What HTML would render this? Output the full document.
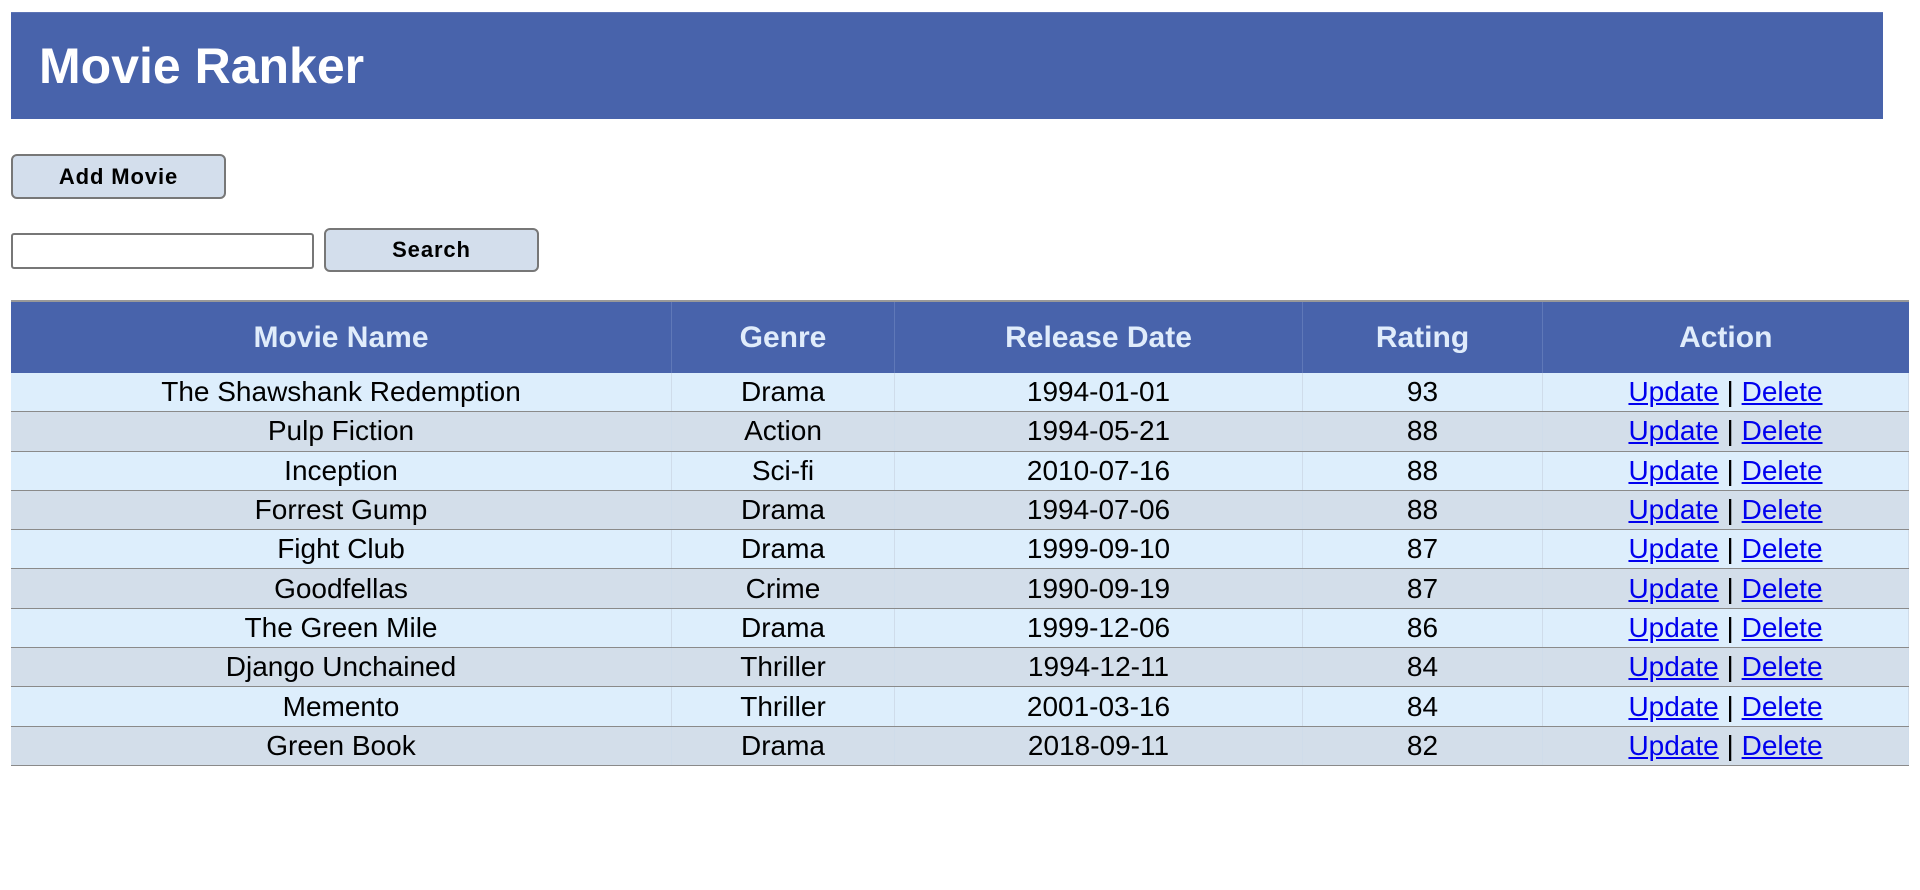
<!DOCTYPE html>
<html><head><style>
body{margin:0;background:#fff;font-family:"Liberation Sans",sans-serif;width:1920px;height:890px;overflow:hidden;position:relative}
.hdr{position:absolute;left:11px;top:12px;width:1872px;height:106px;background:#4863ab;border-top:1px solid #5d74b5}
.hdr h1{margin:0;position:absolute;left:28px;top:28px;font-size:50px;color:#fff;font-weight:bold;line-height:50px}
.btn{position:absolute;background:#d3deec;border:2px solid #777;border-radius:6px;box-sizing:border-box;font-weight:bold;font-size:22px;letter-spacing:.9px;text-align:center;color:#000}
.inp{position:absolute;left:11px;top:233px;width:303px;height:36px;border:2px solid #777;border-radius:3px;box-sizing:border-box}
table{position:absolute;left:11px;top:300px;width:1898px;border-collapse:collapse;border-top:2px solid #999}
th{background:#4863ab;color:#e0ecfb;font-size:30px;height:71px;font-weight:bold;border-right:1px solid #5f78b8;padding:0}
th:last-child{border-right:none}
td{text-align:center;font-size:28px;height:38.3px;line-height:30px;padding:0;border-bottom:1.5px solid #8a8a8a;border-right:1px solid #cfdcea}
tr:nth-child(odd) td{background:#ddeefc}
tr:nth-child(even) td{background:#d3deea}
a{color:#0000ee;text-decoration:underline}
</style></head><body>
<div class="hdr"><h1>Movie Ranker</h1></div>
<div class="btn" style="left:11px;top:154px;width:215px;height:45px;line-height:41px">Add Movie</div>
<div class="inp"></div>
<div class="btn" style="left:324px;top:228px;width:215px;height:44px;line-height:40px">Search</div>
<table>
<thead><tr><th style="width:660px">Movie Name</th><th style="width:222px">Genre</th><th style="width:407px">Release Date</th><th style="width:239px">Rating</th><th>Action</th></tr></thead>
<tbody>
<tr><td>The Shawshank Redemption</td><td>Drama</td><td>1994-01-01</td><td>93</td><td><a>Update</a> | <a>Delete</a></td></tr>
<tr><td>Pulp Fiction</td><td>Action</td><td>1994-05-21</td><td>88</td><td><a>Update</a> | <a>Delete</a></td></tr>
<tr><td>Inception</td><td>Sci-fi</td><td>2010-07-16</td><td>88</td><td><a>Update</a> | <a>Delete</a></td></tr>
<tr><td>Forrest Gump</td><td>Drama</td><td>1994-07-06</td><td>88</td><td><a>Update</a> | <a>Delete</a></td></tr>
<tr><td>Fight Club</td><td>Drama</td><td>1999-09-10</td><td>87</td><td><a>Update</a> | <a>Delete</a></td></tr>
<tr><td>Goodfellas</td><td>Crime</td><td>1990-09-19</td><td>87</td><td><a>Update</a> | <a>Delete</a></td></tr>
<tr><td>The Green Mile</td><td>Drama</td><td>1999-12-06</td><td>86</td><td><a>Update</a> | <a>Delete</a></td></tr>
<tr><td>Django Unchained</td><td>Thriller</td><td>1994-12-11</td><td>84</td><td><a>Update</a> | <a>Delete</a></td></tr>
<tr><td>Memento</td><td>Thriller</td><td>2001-03-16</td><td>84</td><td><a>Update</a> | <a>Delete</a></td></tr>
<tr><td>Green Book</td><td>Drama</td><td>2018-09-11</td><td>82</td><td><a>Update</a> | <a>Delete</a></td></tr>
</tbody></table>
</body></html>
